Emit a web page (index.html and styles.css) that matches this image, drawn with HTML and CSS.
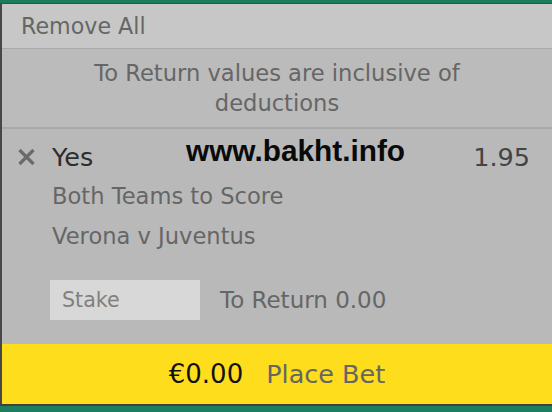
FILE: index.html
```html
<!DOCTYPE html>
<html>

<head>
	<meta charset="utf-8">
	<title>Bet Slip</title>
	<link rel="stylesheet" href="styles.css">
</head>

<body>
	<div class="top-strip"></div>
	<div class="slip">
		<div class="remove-all">Remove All</div>

		<div class="notice">
			To Return values are inclusive of<br>deductions
		</div>

		<div class="bet">
			<div class="bet-head">
				<button class="bet-remove" title="Remove selection">
					<svg width="19" height="18" viewBox="0 0 19 18">
						<path d="M2.5 2 L16.5 16 M16.5 2 L2.5 16" stroke="#6a6a6a" stroke-width="3.2" fill="none" />
					</svg>
				</button>
				<span class="bet-name">Yes</span>
				<span class="bet-odds">1.95</span>
			</div>
			<div class="bet-detail">Both Teams to Score</div>
			<div class="bet-detail">Verona v Juventus</div>

			<div class="stake-row">
				<input class="stake-input" type="text" placeholder="Stake">
				<span class="to-return">To Return 0.00</span>
			</div>

			<div class="watermark">www.bakht.info</div>
		</div>

		<div class="place-bet">
			<span class="place-total">€0.00</span>
			<span class="place-label">Place Bet</span>
		</div>
	</div>
	<div class="bottom-strip"></div>
</body>

</html>
```

FILE: styles.css
```css
body {
  margin: 0;
  width: 552px;
  height: 412px;
  overflow: hidden;
  background-color: #b9b9b9;
  font-family: "DejaVu Sans", Verdana, sans-serif;
  color: #666666;
}

.top-strip {
  height: 3px;
  background-color: #1b7b5a;
  border-bottom: 1px solid #2c5648;
}

.slip {
  position: relative;
  border-left: 2px solid #474747;
}

.remove-all {
  height: 44px;
  line-height: 44px;
  padding-left: 19px;
  font-size: 22.2px;
  background-color: #c7c7c7;
  border-bottom: 1px solid #a9a9a9;
}

.notice {
  padding-block: 9px;
  font-size: 22.6px;
  line-height: 30px;
  text-align: center;
  background-color: #bbbbbb;
  border-bottom: 2px solid #a9a9a9;
}

.bet {
  height: 215px;
  box-sizing: border-box;
  padding-top: 11px;
  padding-left: 15px;
  padding-right: 22px;
  background-color: #b9b9b9;
}

.bet-head {
  display: flex;
  align-items: center;
  height: 34px;
}

.bet-remove {
  display: flex;
  padding: 0;
  border-style: none;
  background: none;
  margin-right: 16px;
}

.bet-name {
  font-size: 25.5px;
  color: #2e2e2e;
}

.bet-odds {
  margin-left: auto;
  font-size: 25.5px;
  color: #444444;
}

.bet-detail {
  padding-left: 35px;
  font-size: 22.6px;
  line-height: 40px;
}
.bet-head + .bet-detail {
  margin-top: 2px;
}

.stake-row {
  display: flex;
  align-items: center;
  gap: 20px;
  margin-top: 24px;
  padding-left: 33px;
}

.stake-input {
  width: 150px;
  height: 40px;
  box-sizing: border-box;
  padding-left: 12px;
  border-style: none;
  outline: none;
  background-color: #d8d8d8;
  font-family: inherit;
  font-size: 20.6px;
}
.stake-input::placeholder {
  color: #808080;
}

.to-return {
  font-size: 23px;
}

.watermark {
  position: absolute;
  top: 132px;
  left: 184px;
  font-family: "Liberation Sans", Arial, sans-serif;
  font-weight: bold;
  font-size: 29.8px;
  line-height: 30px;
  color: #0a0a0a;
}

.place-bet {
  display: flex;
  justify-content: center;
  align-items: center;
  gap: 23px;
  height: 60px;
  background-color: #fedd1c;
  font-size: 25.5px;
}

.place-total {
  font-size: 26px;
  color: #111111;
}

.bottom-strip {
  height: 6px;
  background-color: #1b7f5d;
  border-top: 2px solid #3f3f3f;
}
```
